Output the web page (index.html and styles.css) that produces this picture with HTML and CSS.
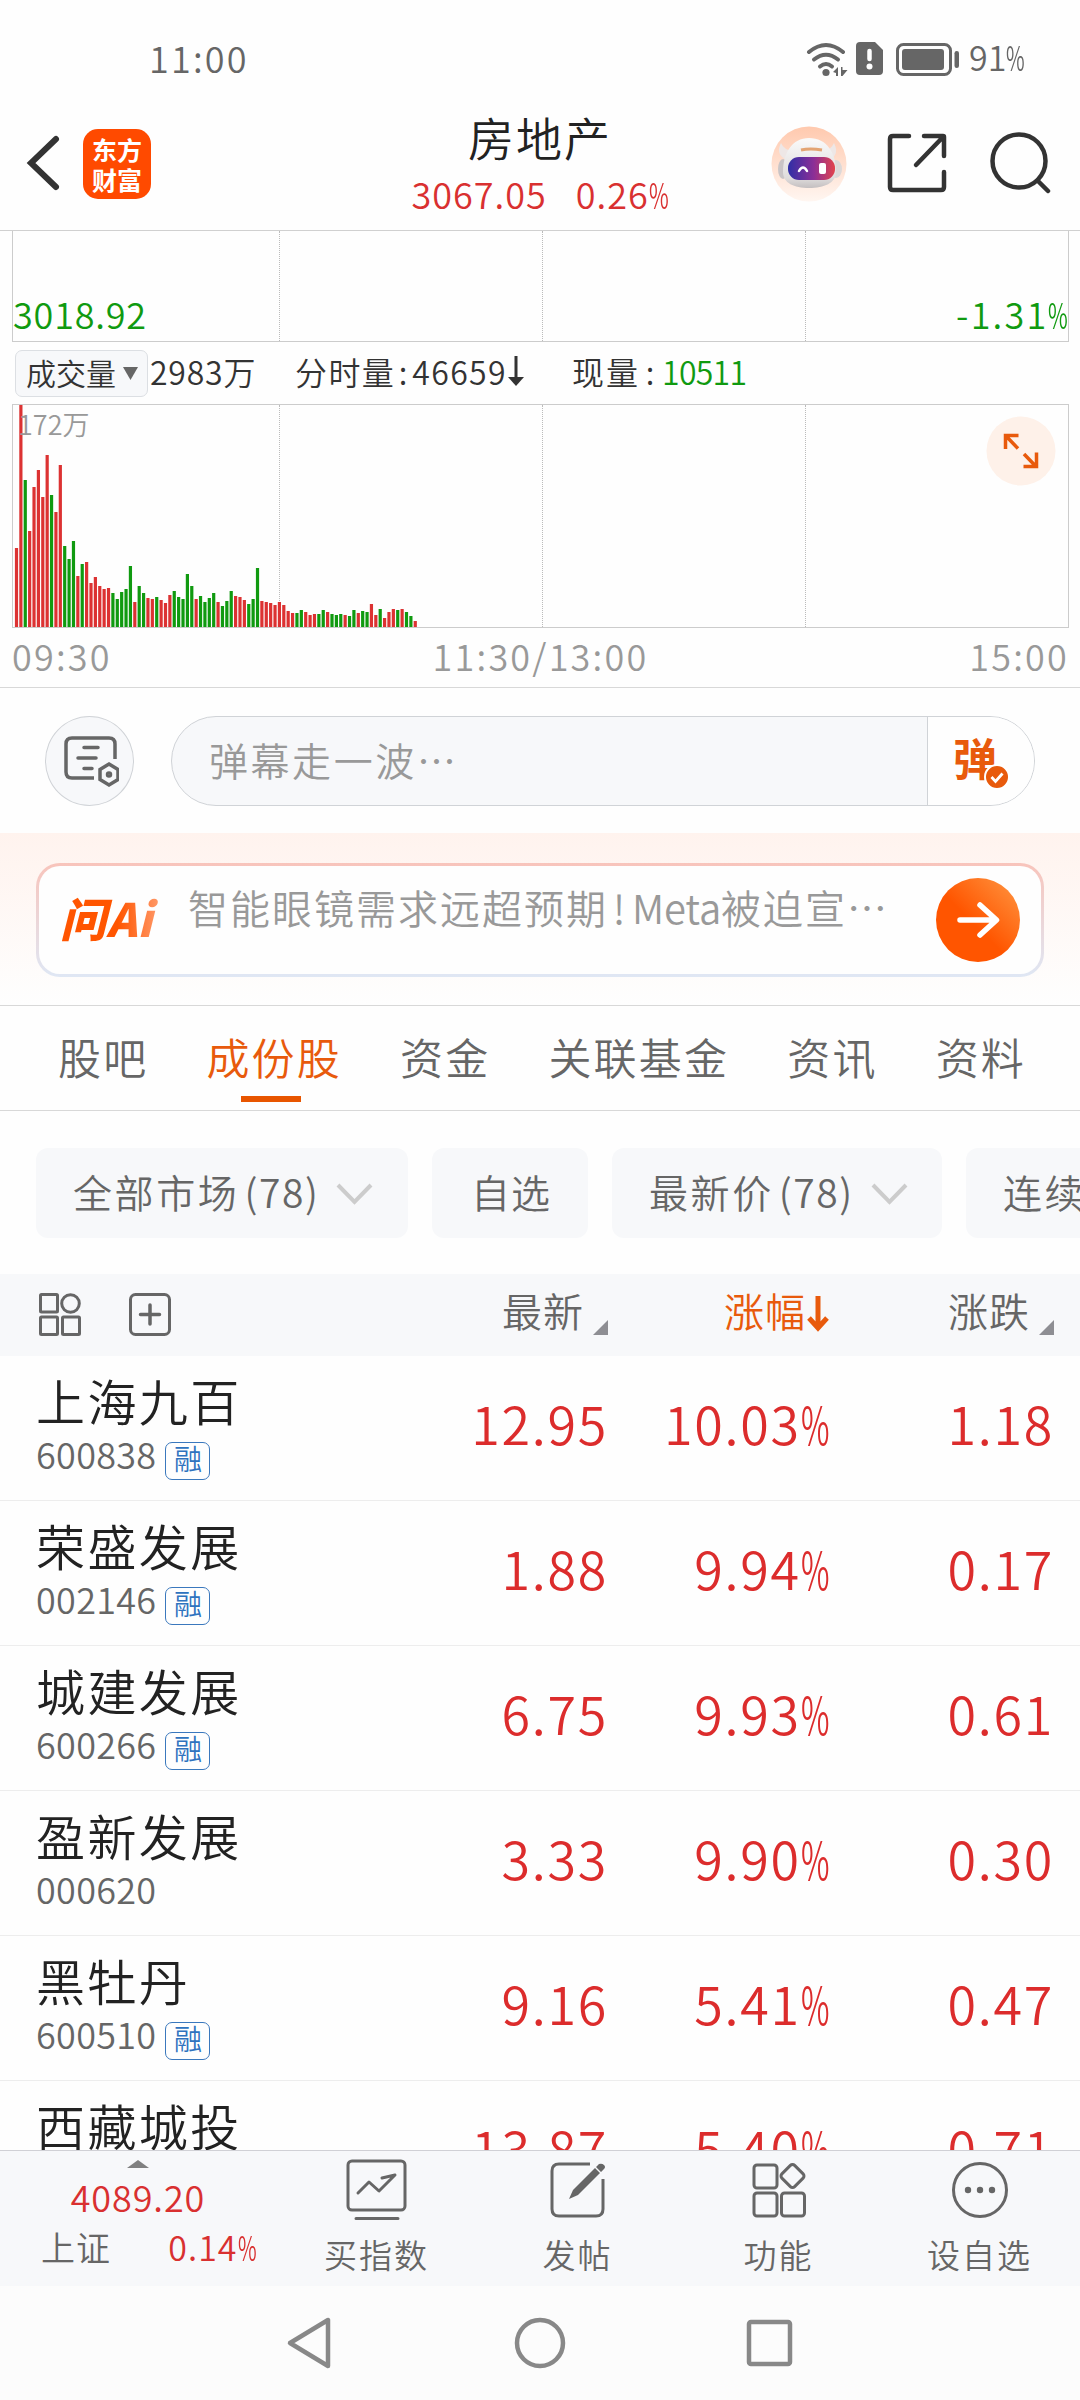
FILE: index.html
```html
<!DOCTYPE html>
<html lang="zh-CN">
<head>
  <meta charset="UTF-8">
  <title>房地产</title>
  <meta name="viewport" content="width=device-width, initial-scale=1.0">
  <link rel="stylesheet" href="styles.css">
</head>
<body>

<div class="status-bar">
  <span class="time">11:00</span>
  <svg class="wifi" width="42" height="36" viewBox="0 0 42 36">
    <g fill="none" stroke="#666" stroke-width="4" stroke-linecap="round">
      <path d="M3 10Q20 -4 37 10"/>
      <path d="M8 17.500Q20 8 32 17.500"/>
      <path d="M14 24.500Q20 19.500 26 24.500"/>
    </g>
    <circle cx="20" cy="30.500" r="3.600" fill="#666"/>
    <path d="M27 30l5-5v9h-2v-3zM35 25h1.500v3h5l-5 6H35z" fill="#666"/>
  </svg>
  <svg class="sim" width="27" height="33" viewBox="0 0 27 33">
    <path d="M4 0h15l8 8v21a4 4 0 0 1-4 4H4a4 4 0 0 1-4-4V4a4 4 0 0 1 4-4z" fill="#666"/>
    <path d="M13.500 9v8" stroke="#fff" stroke-width="4.500" stroke-linecap="round"/>
    <circle cx="13.500" cy="24.500" r="3" fill="#fff"/>
  </svg>
  <svg class="battery" width="64" height="33" viewBox="0 0 64 33">
    <rect x="1.500" y="1.500" width="53" height="30" rx="6" fill="none" stroke="#666" stroke-width="3"/>
    <rect x="6" y="6" width="42" height="21" rx="3" fill="#666"/>
    <rect x="58.500" y="8" width="4.500" height="17" rx="2.200" fill="#666"/>
  </svg>
  <span class="level">91<span class="pct">%</span></span>
</div>

<div class="header">
  <div class="header-left">
    <svg width="36" height="60" viewBox="0 0 36 60"><path d="M31 6L6 30l25 24" fill="none" stroke="#333" stroke-width="6" stroke-linecap="round"/></svg>
    <div class="logo">东方<br>财富</div>
  </div>
  <div class="header-title">
    <div class="title">房地产</div>
    <div class="quote"><span>3067.05</span><span>0.26<span class="pct">%</span></span></div>
  </div>
  <div class="header-right">
    <svg width="76" height="78" viewBox="0 0 76 78">
      <defs>
        <linearGradient id="halo" x1="0" y1="0" x2="0" y2="1"><stop offset="0" stop-color="#ffc9ae"/><stop offset="1" stop-color="#fff6f1"/></linearGradient>
        <linearGradient id="visor" x1="0" y1="0" x2="1" y2="0"><stop offset="0" stop-color="#2f2fa6"/><stop offset=".55" stop-color="#8c2f96"/><stop offset="1" stop-color="#e2434c"/></linearGradient>
        <linearGradient id="shell" x1="0" y1="0" x2="0" y2="1"><stop offset="0" stop-color="#fafafa"/><stop offset=".8" stop-color="#dfdcdc"/><stop offset="1" stop-color="#c4bfc0"/></linearGradient>
      </defs>
      <circle cx="38" cy="39" r="37.500" fill="url(#halo)"/>
      <path d="M10 18q-6 12 6 17l6-9q-9-1-12-8zM63 18q6 12-5 17l-6-9q8-1 11-8z" fill="#eee7e6"/>
      <ellipse cx="12" cy="44" rx="5" ry="10" fill="#c9c4c6"/>
      <ellipse cx="65" cy="44" rx="6" ry="9" fill="#dcd8d8"/>
      <path d="M38 13c18 0 27 15 27 34 0 11-12 16-27 16s-26-5-26-16c0-19 9-34 26-34z" fill="url(#shell)"/>
      <path d="M30 25q9-2 21 0" stroke="#e3a473" stroke-width="3" fill="none"/>
      <rect x="17" y="32" width="47" height="23" rx="11" fill="url(#visor)"/>
      <path d="M28 46q4-7 8 0" stroke="#fff" stroke-width="2.500" fill="none" stroke-linecap="round"/>
      <rect x="48" y="38" width="7" height="11" rx="2" fill="#fff"/>
    </svg>
    <svg width="60" height="60" viewBox="0 0 60 60" fill="none" stroke="#333" stroke-width="4.500" stroke-linecap="round" stroke-linejoin="round">
      <path d="M22 3H6Q3 3 3 6v48q0 3 3 3h48q3 0 3-3V39M37 3h19q1 0 1 1v19M56 4L29 32"/>
    </svg>
    <svg width="62" height="62" viewBox="0 0 62 62" fill="none" stroke="#333" stroke-width="4.500" stroke-linecap="round">
      <circle cx="29" cy="29" r="26.500"/><path d="M47.500 48.500L58 59"/>
    </svg>
  </div>
</div>

<div class="price-chart">
  <i></i><i></i><i></i><i></i>
  <div class="range"><span>3018.92</span><span class="low">-1.31<span class="pct">%</span></span></div>
</div>

<div class="volume-info">
  <div class="indicator">成交量<svg width="15" height="13" viewBox="0 0 15 13"><path d="M0 0h15L7.500 13z" fill="#666"/></svg></div>
  <span class="total">2983万</span>
  <span class="minute">分时量<span class="colon">:</span>46659<svg width="16" height="30" viewBox="0 0 16 30"><path d="M8 0v23" stroke="#333" stroke-width="3"/><path d="M0 21h16L8 30z" fill="#333"/></svg></span>
  <span class="current">现量<span class="colon">:</span><b>10511</b></span>
</div>

<div class="volume-chart">
  <i></i><i></i><i></i><i></i>
  <svg id="bars" width="1055" height="222" viewBox="0 0 1055 222"></svg>
  <span class="max">172万</span>
  <svg class="expand" width="70" height="70" viewBox="0 0 70 70">
    <circle cx="35" cy="35" r="34.500" fill="#fef1e9"/>
    <path d="M32.500 19.500H19.500v13.500M20 20l12 12.500M38 38l12 12.500M37.500 50.500h13V36.500" fill="none" stroke="#e85a0c" stroke-width="3.500"/>
  </svg>
</div>
<div class="time-axis"><span>09:30</span><span>11:30/13:00</span><span>15:00</span></div>

<div class="comment-bar">
  <div class="round-btn">
    <svg width="56" height="56" viewBox="0 0 56 56" fill="none" stroke="#666" stroke-width="3.500">
      <path d="M31 45H9q-6 0-6-6V11q0-6 6-6h37q6 0 6 6v15"/>
      <path d="M21 14.500h14M15 25h18M21 35.500h8" stroke-linecap="round"/>
      <path d="M46 31l9 5.500v10L46 52l-9-5.500v-10z"/><circle cx="46" cy="41.500" r="1.500"/>
    </svg>
  </div>
  <div class="input">
    <span class="placeholder">弹幕走一波…</span>
    <div class="danmu">弹
      <svg class="danmu-on" width="26" height="26" viewBox="0 0 26 26"><circle cx="13" cy="13" r="12" fill="#e85a0c" stroke="#fff" stroke-width="2"/><path d="M7.500 13l4 4.500 7-8" fill="none" stroke="#fff" stroke-width="2.800"/></svg>
    </div>
  </div>
</div>

<div class="ai-band">
  <div class="ai-card">
    <span class="ai-logo">问Ai</span>
    <span class="ai-text">智能眼镜需求远超预期<span class="mark">!</span><span class="latin">Meta</span>被迫宣…</span>
    <svg width="84" height="84" viewBox="0 0 84 84">
      <defs><linearGradient id="go" x1="1" y1="0" x2="0" y2="1"><stop offset=".1" stop-color="#ff8c37"/><stop offset=".55" stop-color="#ff5500"/></linearGradient></defs>
      <circle cx="42" cy="42" r="42" fill="url(#go)"/>
      <path d="M24 42h36M44 27l16.500 15L44 57" fill="none" stroke="#fff" stroke-width="5.500" stroke-linecap="round" stroke-linejoin="round"/>
    </svg>
  </div>
</div>

<div class="tabs">
  <span>股吧</span><span class="active">成份股</span><span>资金</span><span>关联基金</span><span>资讯</span><span>资料</span>
</div>

<div class="filters">
  <div class="chip chip-market">全部市场<em>(78)</em><svg width="37" height="22" viewBox="0 0 37 22"><path d="M2 2l16.500 17L35 2" fill="none" stroke="#ccc" stroke-width="4"/></svg></div>
  <div class="chip chip-own">自选</div>
  <div class="chip chip-price">最新价<em>(78)</em><svg width="37" height="22" viewBox="0 0 37 22"><path d="M2 2l16.500 17L35 2" fill="none" stroke="#ccc" stroke-width="4"/></svg></div>
  <div class="chip chip-more">连续</div>
</div>

<div class="row table-head">
  <div class="tools">
    <svg width="42" height="43" viewBox="0 0 42 43" fill="none" stroke="#666" stroke-width="3">
      <rect x="1.500" y="1.500" width="17" height="17.500" rx="1"/><circle cx="31.500" cy="10.500" r="8.800"/>
      <rect x="1.500" y="24" width="17" height="17.500" rx="1"/><rect x="23.500" y="24" width="17" height="17.500" rx="1"/>
    </svg>
    <svg width="42" height="43" viewBox="0 0 42 43" fill="none" stroke="#666" stroke-width="3">
      <rect x="1.500" y="1.500" width="39" height="40" rx="5"/><path d="M21 12v19M11.500 21.500h19" stroke-width="3.500" stroke-linecap="round"/>
    </svg>
  </div>
  <div class="col">最新<svg width="15" height="15" viewBox="0 0 15 15"><path d="M15 0v15H0z" fill="#8e8e93"/></svg></div>
  <div class="col sorted">涨幅<svg class="down" width="22" height="36" viewBox="0 0 22 36"><path d="M11 0v32M2 22l9 10 9-10" fill="none" stroke="#e85a0c" stroke-width="5"/></svg></div>
  <div class="col">涨跌<svg width="15" height="15" viewBox="0 0 15 15"><path d="M15 0v15H0z" fill="#8e8e93"/></svg></div>
</div>

<div class="list">
  <div class="row">
    <div class="stock"><div class="name">上海九百</div><div class="code">600838<span class="tag">融</span></div></div>
    <div class="num">12.95</div><div class="num">10.03<span class="pct">%</span></div><div class="num">1.18</div>
  </div>
  <div class="row">
    <div class="stock"><div class="name">荣盛发展</div><div class="code">002146<span class="tag">融</span></div></div>
    <div class="num">1.88</div><div class="num">9.94<span class="pct">%</span></div><div class="num">0.17</div>
  </div>
  <div class="row">
    <div class="stock"><div class="name">城建发展</div><div class="code">600266<span class="tag">融</span></div></div>
    <div class="num">6.75</div><div class="num">9.93<span class="pct">%</span></div><div class="num">0.61</div>
  </div>
  <div class="row">
    <div class="stock"><div class="name">盈新发展</div><div class="code">000620</div></div>
    <div class="num">3.33</div><div class="num">9.90<span class="pct">%</span></div><div class="num">0.30</div>
  </div>
  <div class="row">
    <div class="stock"><div class="name">黑牡丹</div><div class="code">600510<span class="tag">融</span></div></div>
    <div class="num">9.16</div><div class="num">5.41<span class="pct">%</span></div><div class="num">0.47</div>
  </div>
  <div class="row">
    <div class="stock"><div class="name">西藏城投</div></div>
    <div class="num">13.87</div><div class="num">5.40<span class="pct">%</span></div><div class="num">0.71</div>
  </div>
</div>

<div class="bottom-bar">
  <div class="index">
    <svg width="22" height="8" viewBox="0 0 22 8"><path d="M11 0l11 8H0z" fill="#808080"/></svg>
    <div class="index-value">4089.20</div>
    <div class="index-row"><span>上证</span><b>0.14<span class="pct">%</span></b></div>
  </div>
  <div class="action">
    <svg width="62" height="64" viewBox="0 0 62 64" fill="none" stroke="#666" stroke-width="3" stroke-linecap="round" stroke-linejoin="round">
      <rect x="2" y="3" width="57" height="49" rx="4"/><path d="M12 35l11-11 10 9 16-16M36 20l13-3M10 60.500h42"/>
    </svg>
    <span>买指数</span>
  </div>
  <div class="action">
    <svg width="62" height="64" viewBox="0 0 62 64" fill="none" stroke="#666" stroke-width="3">
      <path d="M43 6H12q-7 0-7 7v38q0 7 7 7h37q7 0 7-7V21"/>
      <path d="M22 41l4-9 22-22 5 5-22 22zM49 9l3-3q3-1 5 1t0 4l-3 3z" fill="#666" stroke="none"/>
    </svg>
    <span>发帖</span>
  </div>
  <div class="action">
    <svg width="62" height="64" viewBox="0 0 62 64" fill="none" stroke="#666" stroke-width="3">
      <rect x="6" y="7" width="23" height="23" rx="3"/><rect x="6" y="35" width="23" height="23" rx="3"/><rect x="33.500" y="35" width="23" height="23" rx="3"/>
      <rect x="35.500" y="9" width="18" height="18" rx="3" transform="rotate(45 44.500 18)"/>
    </svg>
    <span>功能</span>
  </div>
  <div class="action">
    <svg width="62" height="64" viewBox="0 0 62 64">
      <circle cx="31" cy="32" r="26.500" fill="none" stroke="#666" stroke-width="3"/>
      <g fill="#666"><circle cx="19" cy="32" r="3.200"/><circle cx="31" cy="32" r="3.200"/><circle cx="43" cy="32" r="3.200"/></g>
    </svg>
    <span>设自选</span>
  </div>
</div>

<div class="nav">
  <svg width="50" height="54" viewBox="0 0 50 54"><path d="M43 4v46L5 27z" fill="none" stroke="#888" stroke-width="4.500" stroke-linejoin="round"/></svg>
  <svg width="54" height="54" viewBox="0 0 54 54"><circle cx="27" cy="27" r="23" fill="none" stroke="#888" stroke-width="4.500"/></svg>
  <svg width="50" height="54" viewBox="0 0 50 54"><rect x="4" y="6" width="41" height="42" rx="2" fill="none" stroke="#888" stroke-width="4.500"/></svg>
</div>

<script src="chart.js"></script>
</body>
</html>
```
FILE: styles.css
```css
* { box-sizing: border-box; }
body {
  margin: 0;
  width: 1080px;
  height: 2400px;
  overflow: hidden;
  background: #fefefe;
  color: #666;
  font-family: "Noto Sans CJK SC", sans-serif;
  font-weight: 350;
  white-space: nowrap;
}
svg { display: block; flex: none; }
b, em { font-weight: inherit; font-style: normal; }

/* narrow percent sign */
.pct {
  display: inline-block;
  transform: scaleX(0.6);
  transform-origin: left;
  margin-right: -0.37em;
  letter-spacing: 0;
}
.colon { display: inline-block; width: 15px; text-align: center; }

.status-bar {
  display: flex;
  align-items: flex-start;
  height: 112px;
  padding: 42px 0 0 149px;
}
.time { font-size: 36px; line-height: 30px; letter-spacing: 2.2px; width: 657px; }
.wifi { margin-right: 8px; }
.sim { margin-right: 13px; }
.battery { margin: 1px 9px 0 0; }
.level { font-size: 34px; line-height: 30px; }

.header {
  display: grid;
  grid-template-columns: 390px 300px 390px;
  height: 119px;
  border-bottom: 1px solid #d0d0d0;
}
.header-left { display: flex; align-items: flex-start; padding: 21px 0 0 25px; }
.logo {
  width: 68px;
  height: 70px;
  margin: -4px 0 0 22px;
  padding-top: 5px;
  border-radius: 15px;
  background: #ff4a00;
  color: #fff;
  font-size: 25px;
  font-weight: 700;
  line-height: 30px;
  text-align: center;
}
.header-title { text-align: center; }
.title { color: #222; font-size: 46px; line-height: 48px; letter-spacing: 2px; }
.quote {
  display: flex;
  justify-content: center;
  gap: 29px;
  color: #d93030;
  font-size: 36px;
  line-height: 40px;
  margin-top: 13px;
  letter-spacing: 1px;
}
.header-right { display: flex; padding: 13px 0 0 81px; }
.header-right svg:nth-child(2) { margin: 8px 0 0 40px; }
.header-right svg:nth-child(3) { margin: 7px 0 0 43px; }

.price-chart, .volume-chart {
  display: grid;
  grid-template-columns: 266px 263px 263px 1fr;
  position: relative;
  width: 1057px;
  margin-left: 12px;
  border: 1px solid #ccc;
}
.price-chart { height: 111px; border-top: 0; }
.price-chart i + i, .volume-chart i + i { border-left: 1px dotted #bbb; }
.range {
  position: absolute;
  left: 0;
  right: 0;
  bottom: 5px;
  display: flex;
  justify-content: space-between;
  color: #109a10;
  font-size: 36px;
  line-height: 46px;
  letter-spacing: 0.8px;
}
.range .low { letter-spacing: 2.2px; }

.volume-info {
  display: flex;
  align-items: center;
  height: 62px;
  padding-left: 15px;
  color: #333;
  font-size: 32px;
  line-height: 44px;
}
.indicator {
  display: flex;
  align-items: center;
  gap: 7px;
  width: 133px;
  height: 47px;
  padding: 0 0 3px 10px;
  border: 1px solid #dcdfe3;
  border-radius: 7px;
  background: #f7f8fa;
  font-size: 30px;
}
.indicator svg { margin-top: 4px; }
.total { width: 147px; margin-top: -5px; padding-left: 2px; letter-spacing: 0.8px; }
.minute { display: flex; align-items: center; gap: 1px; width: 277px; margin-top: -5px; letter-spacing: 1.4px; }
.current { margin-top: -5px; letter-spacing: 2px; }
.current .colon { width: 22px; }
.current b { color: #109a10; letter-spacing: -0.7px; }

.volume-chart { height: 224px; }
#bars { position: absolute; left: 0; top: 0; }
.max { position: absolute; left: 5px; top: 1px; color: #999; font-size: 27px; line-height: 36px; }
.expand { position: absolute; right: 12px; top: 11px; }
.time-axis {
  display: flex;
  justify-content: space-between;
  height: 60px;
  padding: 4px 11px 0 12px;
  border-bottom: 1px solid #d8d8d8;
  color: #999;
  font-size: 36px;
  line-height: 46px;
  letter-spacing: 2.2px;
}

.comment-bar { display: flex; gap: 37px; height: 145px; padding: 28px 45px 0; }
.round-btn {
  width: 89px;
  height: 90px;
  padding: 16px 0 0 17px;
  border: 1px solid #d0d3d7;
  border-radius: 50%;
  background: #f7f8fa;
}
.input {
  display: flex;
  width: 865px;
  height: 90px;
  border: 1px solid #d0d3d7;
  border-radius: 45px;
  background: #f7f8fa;
  overflow: hidden;
}
.placeholder { flex: 1; padding-left: 37px; color: #999; font-size: 39px; line-height: 84px; letter-spacing: 2.6px; }
.danmu {
  position: relative;
  width: 107px;
  padding-left: 25px;
  border-left: 1px solid #d0d3d7;
  background: #fefefe;
  color: #e85a0c;
  font-size: 44px;
  font-weight: 700;
  line-height: 80px;
}
.danmu-on { position: absolute; left: 56px; top: 47px; }

.ai-band {
  height: 173px;
  padding: 30px 36px 0;
  border-bottom: 1px solid #d8d8d8;
  background: linear-gradient(#fff3ee, #fefefe);
}
.ai-card {
  display: flex;
  height: 114px;
  padding: 12px 21px 0;
  border: 3px solid transparent;
  border-radius: 24px;
  background: linear-gradient(#fefefe, #fefefe) padding-box, linear-gradient(#f8c4bb, #dfe7f4) border-box;
}
.ai-logo {
  width: 128px;
  font-size: 46px;
  font-weight: 900;
  font-style: italic;
  line-height: 78px;
  letter-spacing: 0.5px;
  color: transparent;
  background: linear-gradient(90deg, #ff5500 45%, #ff9a6a 78%);
  -webkit-background-clip: text;
  background-clip: text;
}
.ai-text { width: 748px; color: #999; font-size: 40px; line-height: 58px; letter-spacing: 2px; }
.mark { display: inline-block; width: 24px; text-align: center; }
.latin { letter-spacing: -0.2px; }

.tabs {
  display: flex;
  height: 105px;
  padding-left: 58px;
  border-bottom: 1px solid #d8d8d8;
  font-size: 43px;
  line-height: 100px;
  letter-spacing: 2.2px;
}
.tabs span { margin-right: 58px; }
.tabs .active {
  color: #e85a0c;
  background: linear-gradient(#e85500, #e85500) 35px 90px / 60px 6px no-repeat;
}

.filters { display: flex; gap: 24px; height: 163px; padding: 37px 0 0 36px; overflow: hidden; }
.chip {
  display: flex;
  flex: none;
  align-items: center;
  height: 90px;
  padding: 0 0 4px 37px;
  border-radius: 12px;
  background: #f7f8fa;
  font-size: 39px;
  line-height: 80px;
  letter-spacing: 2.6px;
}
.chip em { letter-spacing: 1.6px; margin: 0 17px 0 5px; }
.chip svg { margin-top: 6px; }
.chip-market { width: 372px; }
.chip-own { width: 156px; padding-left: 39px; letter-spacing: 1px; }
.chip-price { width: 330px; }
.chip-more { width: 114px; border-radius: 12px 0 0 12px; }

.row {
  display: grid;
  grid-template-columns: 387px 221px 221px 225px;
  height: 145px;
  border-bottom: 1px solid #ededed;
}
.table-head { height: 82px; border: 0; background: #f7f8fa; }
.tools { display: flex; gap: 48px; padding: 19px 0 0 39px; }
.col {
  display: flex;
  align-items: flex-start;
  justify-content: flex-end;
  gap: 9px;
  font-size: 40px;
  line-height: 72px;
  letter-spacing: 1px;
}
.col svg { margin-top: 46px; }
.sorted { color: #e85a0c; gap: 1px; }
.col .down { margin-top: 22px; }
.stock { padding: 17px 0 0 36px; }
.name { color: #222; font-size: 49px; line-height: 54px; letter-spacing: 2.4px; }
.code { display: flex; align-items: flex-start; font-size: 36px; line-height: 52px; letter-spacing: 0.3px; }
.tag {
  width: 45px;
  height: 38px;
  margin: 15px 0 0 9px;
  border: 1px solid #3a78bd;
  border-radius: 7px;
  color: #2f73bf;
  font-size: 28px;
  line-height: 30px;
  letter-spacing: 0;
  text-align: center;
}
.num { color: #dc2c2c; font-size: 52px; line-height: 133px; text-align: right; letter-spacing: 1.7px; }
.list { height: 794px; overflow: hidden; }

.bottom-bar {
  display: flex;
  height: 136px;
  border-top: 1px solid #d0d0d5;
  background: #f7f8fa;
}
.index { width: 276px; padding-top: 9px; }
.index svg { margin: 0 auto; }
.index-value { color: #d93030; font-size: 36px; line-height: 40px; margin-top: 8px; text-align: center; letter-spacing: 0.9px; }
.index-row { display: flex; justify-content: space-between; padding: 11px 20px 0 41px; font-size: 34px; line-height: 40px; letter-spacing: 1px; }
.index-row b { color: #d93030; }
.action { display: flex; flex-direction: column; align-items: center; width: 201px; padding-top: 7px; }
.action span { font-size: 33px; line-height: 46px; margin-top: 9px; letter-spacing: 2px; }

.nav {
  display: flex;
  justify-content: center;
  gap: 178px;
  height: 114px;
  padding-top: 30px;
  background: #fcfcfc;
}
```
FILE: chart.js
```js
// minute volume: bar height in px, negative = down minute
var volumes = [
  79, 222, -147, 96, 140, 157, 130, 172, -132, 115, 162, -81, -68, -86, 51, -63,
  65, 44, 50, 41, 38, 39, -34, -28, -35, -38, -61, 25, -41, -34, 29, 28,
  -30, 27, 24, 32, -36, -30, -28, -53, -41, 28, -31, -25, -29, -34, 25, -21,
  -26, -36, 31, 30, 27, -23, -28, -59, 26, 25, 24, 22, 25, 22, 16, 14,
  -14, -17, 15, 12, 13, -13, -17, 15, -13, -12, -13, 12, -11, -17, 14, -16,
  -15, 23, 12, -18, 9, 15, 18, -17, 18, -15, -11, 6
];
var step = 4.382;
var html = "";

volumes.forEach(function (v, i) {
  var h = Math.abs(v);
  var color = v > 0 ? "#dc3232" : "#109a10";
  html += '<rect x="' + (1.9 + i * step).toFixed(2) + '" y="' + (222 - h) + '" width="3.2" height="' + h + '" fill="' + color + '"/>';
});

document.getElementById("bars").innerHTML = html;
```
